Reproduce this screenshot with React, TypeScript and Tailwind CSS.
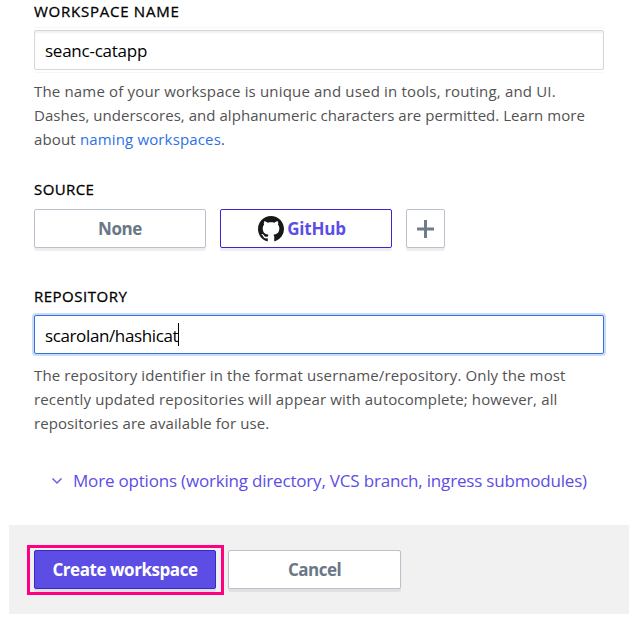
import type { ReactNode } from "react";

function Label({ children, className }: { children: ReactNode; className: string }) {
  return (
    <div
      className={`h-5 text-[15px] leading-5 whitespace-nowrap text-black [-webkit-text-stroke:0.3px_#000] ${className}`}
    >
      {children}
    </div>
  );
}

function Line({ children, className }: { children: ReactNode; className: string }) {
  return <span className={`block whitespace-nowrap ${className}`}>{children}</span>;
}

const button =
  "flex h-[39px] items-center justify-center rounded-[2px] border text-[17px] font-bold whitespace-nowrap shadow-[0_3px_1px_rgba(0,0,0,0.07)]";

export default function App() {
  return (
    <div className="h-[626px] w-[639px] overflow-hidden bg-white font-['Open_Sans','Noto_Sans',sans-serif]">
      <div className="flex h-[525px] flex-col pl-[34px]">
        <Label className="mt-px">
          <span className="tracking-[0.75px]">WORKSPACE NAME</span>
        </Label>
        <div className="mt-[9px] flex h-10 w-[570px] items-center rounded-[2px] border border-[#d5d7db] bg-white pl-[10px] text-[17px] text-black shadow-[inset_0_2px_2px_rgba(0,0,0,0.06),0_-2px_0_#fff,0_-3px_0_#f7f7f9,0_2px_0_#fff,0_3px_0_#f7f7f9]">
          <span className="relative top-px tracking-[-0.25px]">seanc-catapp</span>
        </div>
        <p className="mt-[9px] text-[15px] leading-6 text-[#525252]">
          <Line className="tracking-[0.17px]">The name of your workspace is unique and used in tools, routing, and UI.</Line>
          <Line className="tracking-[0.04px]">Dashes, underscores, and alphanumeric characters are permitted. Learn more</Line>
          <Line className="tracking-[0.15px]">
            about <a className="text-[#2e71e5]">naming workspaces</a>.
          </Line>
        </p>

        <Label className="mt-[28px]">
          <span className="tracking-[0.4px]">SOURCE</span>
        </Label>
        <div className="mt-[10px] flex gap-[14px]">
          <button className={`${button} w-[172px] border-[#bac1cc] bg-white text-[#6a7786]`}>
            <span className="tracking-[-0.45px]">None</span>
          </button>
          <button className={`${button} w-[172px] border-[#3a25ce] bg-white text-[#5c4ee5]`}>
            <svg viewBox="0 0 16 16" className="mr-[3px] h-[26px] w-[26px] fill-[#191717]">
              <path d="M8 0C3.58 0 0 3.58 0 8c0 3.54 2.29 6.53 5.47 7.59.4.07.55-.17.55-.38 0-.19-.01-.82-.01-1.49-2.01.37-2.53-.49-2.69-.94-.09-.23-.48-.94-.82-1.13-.28-.15-.68-.52-.01-.53.63-.01 1.08.58 1.23.82.72 1.21 1.87.87 2.33.66.07-.52.28-.87.51-1.07-1.78-.2-3.64-.89-3.64-3.95 0-.87.31-1.59.82-2.15-.08-.2-.36-1.02.08-2.12 0 0 .67-.21 2.2.82.64-.18 1.32-.27 2-.27s1.36.09 2 .27c1.53-1.04 2.2-.82 2.2-.82.44 1.1.16 1.92.08 2.12.51.56.82 1.27.82 2.15 0 3.07-1.87 3.75-3.65 3.95.29.25.54.73.54 1.48 0 1.07-.01 1.93-.01 2.2 0 .21.15.46.55.38A8.01 8.01 0 0 0 16 8c0-4.42-3.58-8-8-8Z" />
            </svg>
            <span className="mr-[8px] tracking-[-0.2px]">GitHub</span>
          </button>
          <button className={`${button} w-[39px] border-[#bac1cc] bg-white`}>
            <svg viewBox="0 0 18 18" className="mr-px h-[18px] w-[18px] fill-[#6f7c8b]">
              <path d="M8 0h3v7.6h7v2.8h-7V18H8v-7.6H1V7.6h7z" />
            </svg>
          </button>
        </div>

        <Label className="mt-[38px]">
          <span className="tracking-[0.5px]">REPOSITORY</span>
        </Label>
        <div className="mt-[9px] flex h-[39px] w-[570px] items-center rounded-[2px] border border-[#3272d9] bg-white pl-[10px] text-[17px] text-black shadow-[0_0_0_2px_#cbdcf7]">
          <span className="relative top-px tracking-[-0.38px]">scarolan/hashicat</span>
          <span className="h-[23px] w-px bg-black" />
        </div>
        <p className="mt-[9px] text-[15px] leading-6 text-[#525252]">
          <Line className="tracking-[0.13px]">The repository identifier in the format username/repository. Only the most</Line>
          <Line className="tracking-[0.14px]">recently updated repositories will appear with autocomplete; however, all</Line>
          <Line className="tracking-[0.08px]">repositories are available for use.</Line>
        </p>

        <div className="mt-[34px] flex h-6 items-center pl-[17px] text-[17px] whitespace-nowrap text-[#5c4ee5]">
          <svg viewBox="0 0 12 12" className="mr-[10px] h-3 w-3 fill-none stroke-[#6a5de6] stroke-[1.5]">
            <path d="M1.5 3.5 6 8l4.5-4.5" />
          </svg>
          <span className="tracking-[-0.19px]">More options (working directory, VCS branch, ingress submodules)</span>
        </div>
      </div>

      <div className="ml-[9px] flex h-[89px] w-[620px] items-start bg-[#f1f1f1] pl-[18px] pt-5">
        <div className="flex h-[50px] w-[197px] border-[3px] border-[#ff0080] pl-1 pt-[2px]">
          <button className={`${button} w-[182px] border-[#3a25ce] bg-[#5c4ee5] text-white`}>
            <span className="tracking-[-0.45px]">Create workspace</span>
          </button>
        </div>
        <button className={`${button} mt-[5px] ml-1 w-[173px] border-[#bac1cc] bg-white text-[#6a7786]`}>
          <span className="tracking-[-0.5px]">Cancel</span>
        </button>
      </div>
    </div>
  );
}
